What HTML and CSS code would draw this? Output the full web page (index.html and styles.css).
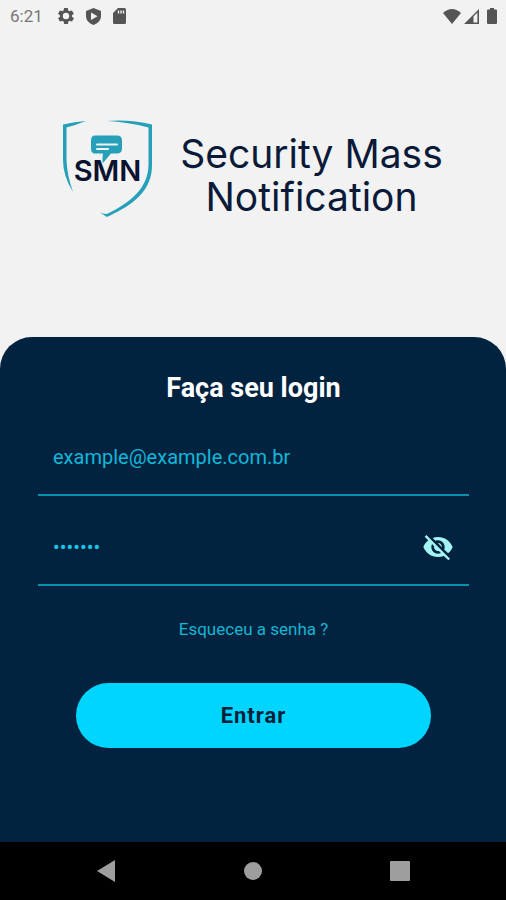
FILE: index.html
```html
<!DOCTYPE html>
<html lang="pt-BR">
<head>
<meta charset="utf-8">
<meta name="viewport" content="width=device-width, initial-scale=1">
<title>Security Mass Notification</title>
<link rel="stylesheet" href="styles.css">
</head>
<body>
<header class="status">
  <div class="status-left">
    <time class="clock">6:21</time>
    <svg width="16" height="16" viewBox="2 2 20 20" aria-hidden="true"><path fill-rule="evenodd" d="M19.4 13a7.500 7.500 0 0 0 0-2l2.100-1.600a.5.5 0 0 0 .1-.6l-2-3.500a.5.5 0 0 0-.6-.2l-2.500 1a7.300 7.300 0 0 0-1.700-1l-.4-2.600a.5.5 0 0 0-.5-.5h-4a.5.5 0 0 0-.5.5L9 5.100a7.300 7.300 0 0 0-1.700 1l-2.500-1a.5.5 0 0 0-.6.2l-2 3.500a.5.5 0 0 0 .1.6L4.500 11a7.500 7.500 0 0 0 0 2l-2.100 1.600a.5.5 0 0 0-.1.6l2 3.500c.1.2.4.3.6.2l2.500-1a7.300 7.300 0 0 0 1.700 1l.4 2.600c0 .3.2.5.5.5h4c.3 0 .5-.2.5-.5l.4-2.600a7.300 7.300 0 0 0 1.700-1l2.500 1c.2.100.5 0 .6-.2l2-3.500a.5.5 0 0 0-.1-.6zM12 16a4 4 0 1 1 0-8 4 4 0 0 1 0 8z"/></svg>
    <svg width="15" height="17" viewBox="0 0 15 17" aria-hidden="true"><path fill-rule="evenodd" d="M7.500 0 15 3v5c0 4-3 7.500-7.500 9C3 15.500 0 12 0 8V3zM5 4.500v7.500l6.500-3.800z"/></svg>
    <svg width="13" height="16" viewBox="0 0 13 16" aria-hidden="true"><path fill-rule="evenodd" d="M5 0h6.500Q13 0 13 1.500v13q0 1.500-1.500 1.500h-10Q0 16 0 14.500V5zM4.800 2.500v3h1.400v-3zM7.300 2.500v3h1.400v-3zM9.800 2.500v3h1.400v-3z"/></svg>
  </div>
  <div class="status-right">
    <svg width="18" height="15" viewBox="0 0 18 15" aria-hidden="true"><path d="M0 4Q9-4 18 4L9 15z"/></svg>
    <svg class="signal" width="15" height="15" viewBox="0 0 15 15" aria-hidden="true"><path fill-rule="evenodd" d="M15 0v15H0zM13.400 3.600 9.500 7.600v5.900h3.900z"/></svg>
    <svg width="10" height="16" viewBox="0 0 10 16" aria-hidden="true"><path d="M3 0h4v1.500h2q1 0 1 1V15q0 1-1 1H1q-1 0-1-1V2.500q0-1 1-1h2z"/></svg>
  </div>
</header>

<section class="brand">
  <svg class="shield" width="90" height="98" viewBox="0 0 90 98" role="img" aria-label="SMN">
    <g fill="#25a0b8">
      <path d="M23 1Q12 1.500 0 4.500V40Q0 56 10 72Q4 55 3.500 40V7.500Q13 5 23 1z"/>
      <path d="M44 1Q66-1 89 4.500V45C89 70 72 84 44 97L37 92.500Q41 94 44 94C68 82 85.500 68 85.500 44V7.500Q65 2 44 1z"/>
      <path d="M32 15.500h22q5 0 5 5v8q0 5-5 5h-6L40 43q-1-2 0-9.500h-8q-4 0-4-5v-8q0-5 4-5z"/>
    </g>
    <path d="M34 24.500h20M34 29h11" stroke="#f2f2f2" stroke-width="2" stroke-linecap="round"/>
    <text class="shield-text" x="44.500" y="61" text-anchor="middle">SMN</text>
  </svg>
  <h1 class="brand-name">Security Mass<br>Notification</h1>
</section>

<main class="panel">
  <form class="login">
    <h2 class="title">Faça seu login</h2>
    <div class="field">
      <input class="input" type="email" aria-label="E-mail" placeholder="example@example.com.br">
    </div>
    <div class="field">
      <input class="input" type="password" aria-label="Senha" value="1234567">
      <button class="toggle" type="button" aria-label="Mostrar senha">
        <svg width="32" height="32" viewBox="0 0 24 24" aria-hidden="true"><path d="M12 7c2.760 0 5 2.240 5 5 0 .650-.130 1.260-.360 1.830l2.920 2.920c1.510-1.260 2.700-2.890 3.430-4.750-1.730-4.390-6-7.500-11-7.500-1.400 0-2.740.250-3.980.700l2.160 2.160C10.740 7.130 11.350 7 12 7zM2 4.270l2.280 2.280.46.460C3.080 8.300 1.780 10.020 1 12c1.730 4.390 6 7.500 11 7.500 1.550 0 3.030-.3 4.380-.84l.42.420L19.730 22 21 20.730 3.270 3 2 4.270zM7.530 9.800l1.550 1.550c-.05.210-.08.430-.08.650 0 1.660 1.340 3 3 3 .22 0 .44-.03.650-.08l1.550 1.550c-.67.330-1.410.530-2.200.530-2.760 0-5-2.240-5-5 0-.79.200-1.530.530-2.200zm4.310-.78 3.150 3.150.020-.16c0-1.660-1.340-3-3-3l-.17.010z"/></svg>
      </button>
    </div>
    <a class="forgot" href="#">Esqueceu a senha ?</a>
    <button class="submit" type="submit">Entrar</button>
  </form>
</main>

<nav class="navbar">
  <button class="nav-key" type="button" aria-label="Voltar"><svg width="20" height="22" viewBox="0 0 20 22"><path d="M19 0v22L1 11z"/></svg></button>
  <button class="nav-key" type="button" aria-label="Início"><svg width="20" height="20" viewBox="0 0 20 20"><circle cx="10" cy="10" r="9"/></svg></button>
  <button class="nav-key" type="button" aria-label="Recentes"><svg width="20" height="20" viewBox="0 0 20 20"><rect width="20" height="20" rx="1"/></svg></button>
</nav>
</body>
</html>
```
FILE: styles.css
```css
* { box-sizing: border-box; }

body {
  margin: 0;
  min-height: 100vh;
  display: flex;
  flex-direction: column;
  background: #f2f2f2;
  font-family: Roboto, sans-serif;
}

svg { display: block; }

button {
  border: 0;
  padding: 0;
  background: none;
  font: inherit;
}

.status {
  height: 32px;
  padding: 0 9px 0 10px;
  display: flex;
  align-items: center;
  justify-content: space-between;
  fill: #555;
}

.status-left,
.status-right {
  display: flex;
  align-items: center;
  gap: 12px;
}

.status-right { gap: 8px; }
.signal { margin-left: -5px; }

.clock {
  margin-right: 3px;
  font-size: 17px;
  color: #777;
}

.brand {
  padding: 88px 0 119px;
  display: flex;
  justify-content: center;
  align-items: flex-start;
  gap: 27px;
}

.shield-text {
  font: 600 29px Inter, sans-serif;
  fill: #0a1230;
}

.brand-name {
  margin: 0;
  padding-top: 12px;
  font: 400 39px/43px Inter, sans-serif;
  text-align: center;
  color: #0a1a38;
}

.panel {
  flex: 1;
  padding: 35px 37px 35px 38px;
  border-radius: 32px 32px 0 0;
  background: #02233f;
}

.login {
  display: flex;
  flex-direction: column;
}

.title {
  margin: 0 0 16px;
  font-size: 27px;
  line-height: 32px;
  text-align: center;
  color: #fff;
}

.field {
  height: 76px;
  margin-bottom: 14px;
  padding: 0 15px;
  display: flex;
  align-items: center;
  border-bottom: 2px solid #0b8fae;
}

.input {
  flex: 1;
  min-width: 0;
  height: 100%;
  padding: 0;
  border: 0;
  outline: 0;
  background: none;
  font: 400 20px Roboto, sans-serif;
  color: #18c6e6;
}

.input::placeholder {
  color: #12b6d8;
  opacity: 1;
}

.toggle { fill: #a5f4f4; }

.forgot {
  align-self: center;
  margin: 19px 0 44px;
  font-size: 17px;
  line-height: 20px;
  color: #18b4d2;
  text-decoration: none;
}

.submit {
  height: 65px;
  margin: 0 38px;
  border-radius: 33px;
  background: #00d5ff;
  font-size: 22px;
  font-weight: 700;
  letter-spacing: 1px;
  color: #062039;
}

.navbar {
  height: 58px;
  padding: 0 19%;
  display: flex;
  align-items: center;
  justify-content: space-between;
  background: #000;
  fill: #9e9e9e;
}
```
